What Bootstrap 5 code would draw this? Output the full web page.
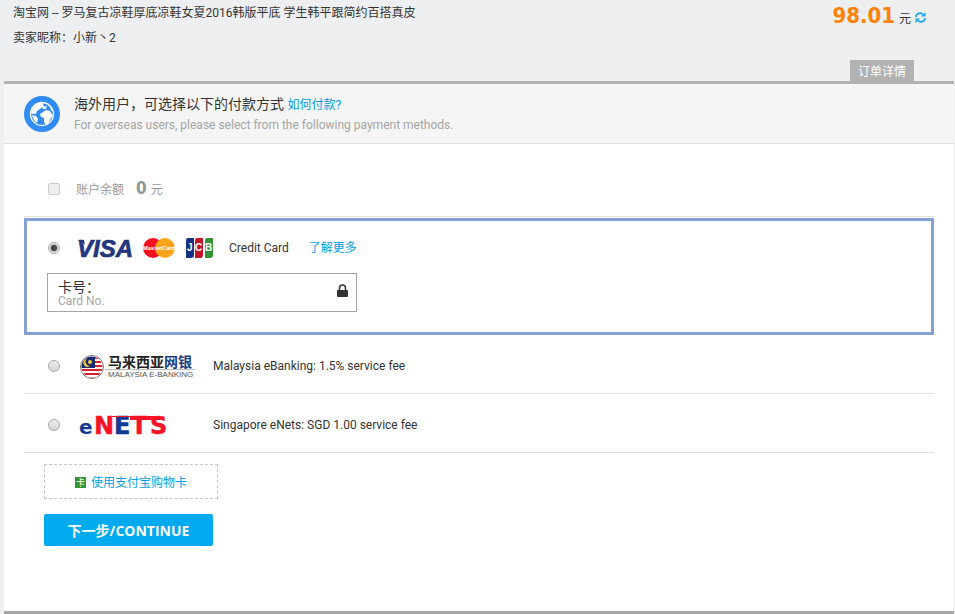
<!DOCTYPE html>
<html lang="zh-CN">
<head>
<meta charset="utf-8">
<meta name="viewport" content="width=device-width, initial-scale=1">
<title>收银台</title>
<link href="https://cdn.jsdelivr.net/npm/bootstrap@5.3.0/dist/css/bootstrap.min.css" rel="stylesheet">
<style>
body{font-family:Roboto,"Noto Sans CJK SC",sans-serif;font-size:12px;line-height:20px;color:#333;background:#eeeff1}
a{color:#00a0e9;text-decoration:none}
a:hover{text-decoration:underline}
.cashier{min-height:100vh;padding:0 1px 0 4px}
.order-head{height:81px;padding:3px 28px 0 9px}
.order-head p{margin:0 0 5px}
.price{font:bold 22px/26px "DejaVu Sans Condensed","DejaVu Sans",sans-serif;color:#ff8208}
.detail-btn{border:0;background:#b2b2b2;color:#fff;width:64px;height:21px;line-height:20px;padding:2px 0 0;margin-right:12px}
.panel{background:#fff;border-top:3px solid #b2b2b2;border-bottom:3px solid #a6a6a6}
.notice{background:#f5f5f5;border-bottom:1px solid #e0e0e0;height:60px;padding:0 20px;gap:14px}
.notice h1{font-size:14px;line-height:20px;font-weight:400;margin:2px 0 0}
.notice h1 a{font-size:12px}
.muted{color:#a5a5a5}
.methods{padding:15px 20px 0}
.method{border-bottom:1px solid #e2e2e2;height:59px;padding:3px 0 0 24px}
.method input,.chosen input[type=radio]{flex:none;width:12px;height:12px;margin:0;appearance:none;border:1px solid #aaa;background:linear-gradient(#eee,#d4d4d4)}
.method input[type=radio],.chosen input[type=radio]{border-radius:50%}
.chosen input[type=radio]:checked{background:radial-gradient(circle,#444 0 2px,#666 3px,#e8e8e8 4px)}
.method input[type=checkbox]{border-radius:2px;border-color:#ccc;background:#eee}
.balance{height:58px;color:#999}
.balance b{font:bold 17px/20px "DejaVu Sans Condensed","DejaVu Sans",sans-serif;color:#8a9a94;margin:0 4px 0 12px}
.logo-cell{flex:none;width:133px}
.chosen{border:3px solid #84a0d4;padding:12px 20px 20px;margin-top:1px}
.pay-line{height:30px;padding-left:1px}
.pay-line label{gap:16px}
.more-link{margin-left:20px}
.card-field{width:310px;max-width:100%;height:39px;margin-top:10px;border:1px solid #a5a5a5;padding:0 8px 0 10px}
.card-field label{font-size:14px;line-height:14px;padding-top:6px}
.card-field label span{display:block;font-size:12px;line-height:14px}
.card-field input{flex:1;min-width:0;height:36px;border:0;background:transparent;outline:0}
.card-field svg{margin-bottom:4px}
.actions{padding:11px 20px 65px}
.gift{width:174px;height:35px;border:1px dashed #c4c4c4;gap:5px;padding-top:2px}
.next-btn{width:169px;height:32px;margin-top:15px;padding:2px 0 0;border:0;border-radius:2px;background:#00aaef;color:#fff;font:bold 14px/30px "Open Sans","Noto Sans CJK SC",sans-serif}
svg{flex:none;display:block;overflow:visible}
</style>
<script src="https://cdn.jsdelivr.net/npm/bootstrap@5.3.0/dist/js/bootstrap.bundle.min.js"></script>
</head>
<body>
<main class="cashier">
<header class="order-head d-flex justify-content-between">
  <div>
    <p>淘宝网 -- 罗马复古凉鞋厚底凉鞋女夏2016韩版平底 学生韩平跟简约百搭真皮</p>
    <p>卖家昵称：小新丶2</p>
  </div>
  <div class="d-flex flex-column justify-content-between align-items-end">
    <div class="d-flex align-items-baseline gap-1">
      <span class="price">98.01</span><span>元</span>
      <a href="#" aria-label="刷新"><svg width="11" height="11" viewBox="0 0 11 11" fill="none" stroke="#18a4ee" stroke-width="1.600"><path d="M1 5A4 4 0 0 1 8 2.500M10 6A4 4 0 0 1 3 8.500"/><path d="M10.500 0v4.500H6zM.5 11V6.500H5z" fill="#18a4ee" stroke="none"/></svg></a>
    </div>
    <button class="detail-btn" type="button">订单详情</button>
  </div>
</header>
<section class="panel">
  <div class="notice d-flex align-items-center">
    <svg width="36" height="36" viewBox="0 0 36 36"><circle cx="18" cy="18" r="18" fill="#2f8bf5"/><circle cx="18" cy="18" r="11.500" fill="none" stroke="#fff" stroke-width="1.300"/><path fill="#fff" d="M7 17q1-7 7-10l6-1-1 3 2 2 2-2-1 4-3 0-1-2-2 2-3 2-1 3-3 0zM19 16l3-2 4 1 1 2 2 2-3 5-2 4-2 1-2-3 0-4-3-1-1-3zM23 8q5 2 6 8l-2-2-1-3zM8 19l4 1 2 3-1 4q-4-3-5-8z"/></svg>
    <div>
      <h1>海外用户，可选择以下的付款方式 <a href="#">如何付款?</a></h1>
      <div class="muted">For overseas users, please select from the following payment methods.</div>
    </div>
  </div>
  <form>
    <div class="methods">
      <div class="method balance d-flex align-items-center">
        <input type="checkbox" id="bal" disabled>
        <label for="bal" class="ms-3 d-flex align-items-baseline">账户余额<b>0</b>元</label>
      </div>
      <div class="chosen">
        <div class="pay-line d-flex align-items-center">
          <input type="radio" name="pay" id="cc" checked class="me-3">
          <label for="cc" class="d-flex align-items-center">
            <svg width="137" height="24" viewBox="0 0 137 24" role="img" aria-label="VISA MasterCard JCB">
              <text x="1" y="21" font-family="Liberation Sans,sans-serif" font-size="24" font-weight="700" font-style="italic" fill="#24367d" stroke="#24367d" stroke-width=".7">VISA</text>
              <path d="M1 4h7l1 5C7 6 5 5 1 4z" fill="#24367d"/>
              <circle cx="77" cy="12" r="10" fill="#f8101f"/><circle cx="89" cy="12" r="10" fill="#ffa51c"/>
              <text x="83" y="14" text-anchor="middle" font-family="Liberation Sans,sans-serif" font-size="6" font-weight="700" font-style="italic" fill="#fff">MasterCard</text>
              <path d="M112 2h6v17q0 3-3 3h-5V5q0-3 2-3z" fill="#152f82"/><path d="M121 2h6v17q0 3-3 3h-5V5q0-3 2-3z" fill="#c3142b"/><path d="M131 2h6v17q0 3-3 3h-5V5q0-3 2-3z" fill="#319434"/>
              <text y="15" font-family="Liberation Sans,sans-serif" font-size="10" font-weight="700" fill="#fff"><tspan x="111">J</tspan><tspan x="119">C</tspan><tspan x="129">B</tspan></text>
            </svg>
            <span>Credit Card</span>
          </label>
          <a href="#" class="more-link">了解更多</a>
        </div>
        <div class="card-field d-flex align-items-center">
          <label for="cardno" class="align-self-start">卡号：<span class="muted">Card No.</span></label>
          <input type="text" id="cardno" inputmode="numeric">
          <svg width="11" height="14" viewBox="0 0 11 14"><rect y="6" width="11" height="7" rx="1" fill="#333"/><path d="M2.500 7V4a3 3 0 0 1 6 0v3" fill="none" stroke="#333" stroke-width="1.500"/></svg>
        </div>
      </div>
      <div class="method d-flex align-items-center">
        <input type="radio" name="pay" id="my" class="me-3">
        <label for="my" class="d-flex align-items-center ps-1">
          <span class="logo-cell"><svg width="120" height="28" viewBox="0 0 120 28" role="img" aria-label="马来西亚网银">
            <clipPath id="flagclip"><circle cx="12" cy="15" r="10.500"/></clipPath>
            <circle cx="12" cy="15" r="11.500" fill="#fff" stroke="#777" stroke-width="1"/>
            <g clip-path="url(#flagclip)"><path d="M0 6h24M0 10h24M0 14h24M0 18h24M0 22h24M0 26h24" stroke="#d8232e" stroke-width="1.800"/><path d="M0 3h15v13H0z" fill="#142d70"/></g>
            <path d="M7 7a4 4 0 1 0 3 7 4 4 0 0 1-3-7z" fill="#f5c73d"/><circle cx="10" cy="10" r="2" fill="#f5c73d"/>
            <text x="28" y="15" font-family="Noto Sans CJK SC,sans-serif" font-size="14" font-weight="700" fill="#222">马来西亚<tspan fill="#203a80">网银</tspan></text>
            <path d="M25 17.500h90" stroke="#bbb"/>
            <text x="28" y="25" font-family="Liberation Sans,sans-serif" font-size="8" fill="#555">MALAYSIA E-BANKING</text>
          </svg></span>
          <span>Malaysia eBanking: 1.5% service fee</span>
        </label>
      </div>
      <div class="method d-flex align-items-center">
        <input type="radio" name="pay" id="sg" class="me-3">
        <label for="sg" class="d-flex align-items-center ps-1">
          <span class="logo-cell"><svg width="92" height="26" viewBox="0 0 92 26" role="img" aria-label="eNETS">
            <text x="-1" y="22" font-family="DejaVu Sans,sans-serif" font-size="20" font-weight="700" fill="#123a92">e</text>
            <text y="22" font-family="DejaVu Sans,sans-serif" font-size="24" font-weight="700" fill="#f51426" stroke="#f51426" stroke-width=".5"><tspan x="14">N</tspan><tspan x="34" fill="#123a92" stroke="#123a92">E</tspan><tspan x="51">T</tspan><tspan x="70">S</tspan></text>
            <path d="M50 4h30v4H50z" fill="#f51426"/><path d="M32 4h20v1H32z" fill="#f51426"/>
          </svg></span>
          <span>Singapore eNets: SGD 1.00 service fee</span>
        </label>
      </div>
      <div class="actions">
        <a href="#" class="gift d-flex align-items-center justify-content-center">
          <svg width="11" height="11" viewBox="0 0 11 11"><rect width="11" height="11" fill="#2f9434"/><text x="1" y="9" font-family="Noto Sans CJK SC,sans-serif" font-size="9" fill="#fff">卡</text></svg>使用支付宝购物卡</a>
        <button class="next-btn" type="submit">下一步/CONTINUE</button>
      </div>
    </div>
  </form>
</section>
</main>
</body>
</html>
